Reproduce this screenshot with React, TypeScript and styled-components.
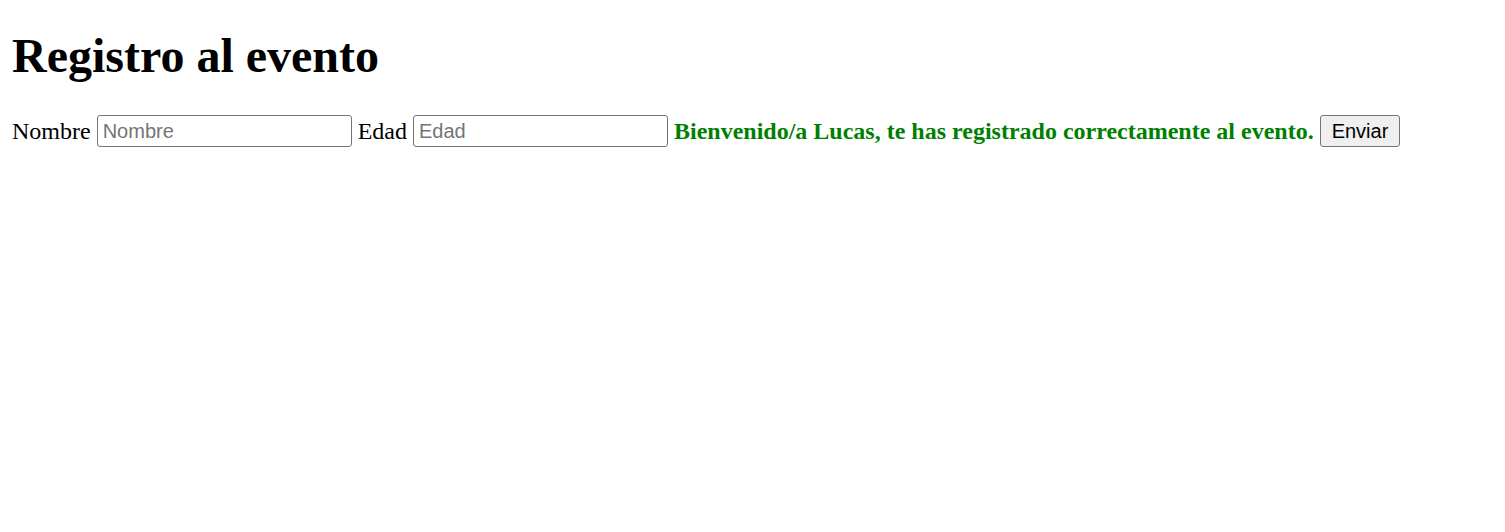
import React from "react";
import styled, { createGlobalStyle } from "styled-components";

const GlobalStyle = createGlobalStyle`
  body {
    margin: 0;
    background: #ffffff;
    font-family: "Liberation Serif", "Times New Roman", serif;
    color: #000000;
  }
`;

const Page = styled.div`
  padding: 0 12px;
`;

const Title = styled.h1`
  font-size: 48px;
  font-weight: 700;
  margin: 28px 0 0;
  line-height: 55px;
`;

const Form = styled.form`
  display: flex;
  align-items: center;
  gap: 6px;
  margin-top: 32px;
  font-size: 24px;
`;

const Label = styled.label`
  white-space: nowrap;
`;

const Field = styled.input`
  box-sizing: border-box;
  width: 255px;
  height: 32px;
  padding: 1px 5px;
  border: 1px solid #767676;
  border-radius: 3px;
  font-family: "Liberation Sans", Arial, sans-serif;
  font-size: 20px;
  color: #000;
  &::placeholder {
    color: #757575;
  }
`;

const Message = styled.span<{ ok: boolean }>`
  font-weight: 700;
  white-space: nowrap;
  color: ${(p) => (p.ok ? "#008000" : "#cc0000")};
`;

const Button = styled.button`
  box-sizing: border-box;
  height: 32px;
  padding: 1px 11px;
  border: 1px solid #767676;
  border-radius: 3px;
  background: #efefef;
  font-family: "Liberation Sans", Arial, sans-serif;
  font-size: 20px;
  color: #000;
`;

export default function App() {
  return (
    <Page>
      <GlobalStyle />
      <Title>Registro al evento</Title>
      <Form onSubmit={(e) => e.preventDefault()}>
        <Label htmlFor="nombre">Nombre</Label>
        <Field id="nombre" type="text" placeholder="Nombre" />
        <Label htmlFor="edad">Edad</Label>
        <Field id="edad" type="number" placeholder="Edad" />
        <Message ok>
          Bienvenido/a Lucas, te has registrado correctamente al evento.
        </Message>
        <Button type="submit">Enviar</Button>
      </Form>
    </Page>
  );
}
